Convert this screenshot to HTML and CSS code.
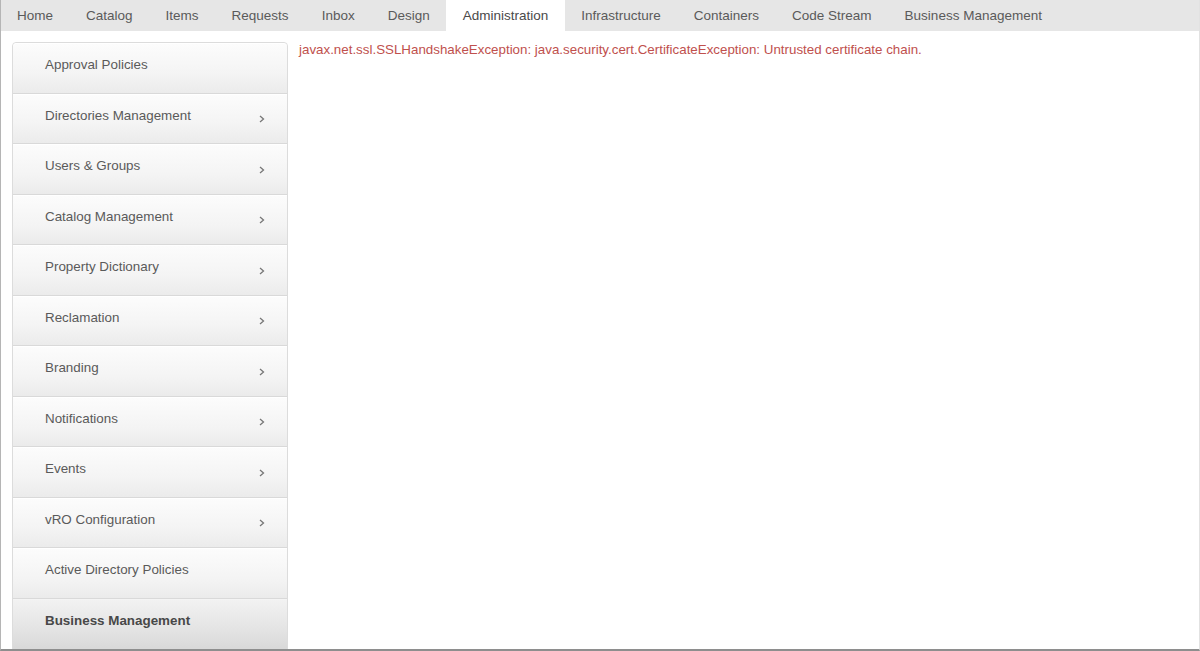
FILE: index.html
```html
<!DOCTYPE html>
<html>
<head>
<meta charset="utf-8">
<link rel="stylesheet" href="styles.css">
</head>
<body>
<div class="window">
  <nav class="tabs">
    <a class="tab">Home</a>
    <a class="tab">Catalog</a>
    <a class="tab">Items</a>
    <a class="tab">Requests</a>
    <a class="tab">Inbox</a>
    <a class="tab">Design</a>
    <a class="tab active">Administration</a>
    <a class="tab">Infrastructure</a>
    <a class="tab">Containers</a>
    <a class="tab">Code Stream</a>
    <a class="tab">Business Management</a>
  </nav>
  <div class="main">
    <ul class="sidebar">
      <li class="item"><span>Approval Policies</span></li>
      <li class="item"><span>Directories Management</span><svg class="chev" width="6" height="8" viewBox="0 0 6 8"><path d="M1 1 L4.5 4 L1 7" fill="none" stroke="#777" stroke-width="1.3"/></svg></li>
      <li class="item"><span>Users &amp; Groups</span><svg class="chev" width="6" height="8" viewBox="0 0 6 8"><path d="M1 1 L4.5 4 L1 7" fill="none" stroke="#777" stroke-width="1.3"/></svg></li>
      <li class="item"><span>Catalog Management</span><svg class="chev" width="6" height="8" viewBox="0 0 6 8"><path d="M1 1 L4.5 4 L1 7" fill="none" stroke="#777" stroke-width="1.3"/></svg></li>
      <li class="item"><span>Property Dictionary</span><svg class="chev" width="6" height="8" viewBox="0 0 6 8"><path d="M1 1 L4.5 4 L1 7" fill="none" stroke="#777" stroke-width="1.3"/></svg></li>
      <li class="item"><span>Reclamation</span><svg class="chev" width="6" height="8" viewBox="0 0 6 8"><path d="M1 1 L4.5 4 L1 7" fill="none" stroke="#777" stroke-width="1.3"/></svg></li>
      <li class="item"><span>Branding</span><svg class="chev" width="6" height="8" viewBox="0 0 6 8"><path d="M1 1 L4.5 4 L1 7" fill="none" stroke="#777" stroke-width="1.3"/></svg></li>
      <li class="item"><span>Notifications</span><svg class="chev" width="6" height="8" viewBox="0 0 6 8"><path d="M1 1 L4.5 4 L1 7" fill="none" stroke="#777" stroke-width="1.3"/></svg></li>
      <li class="item"><span>Events</span><svg class="chev" width="6" height="8" viewBox="0 0 6 8"><path d="M1 1 L4.5 4 L1 7" fill="none" stroke="#777" stroke-width="1.3"/></svg></li>
      <li class="item"><span>vRO Configuration</span><svg class="chev" width="6" height="8" viewBox="0 0 6 8"><path d="M1 1 L4.5 4 L1 7" fill="none" stroke="#777" stroke-width="1.3"/></svg></li>
      <li class="item"><span>Active Directory Policies</span></li>
      <li class="item selected"><span>Business Management</span></li>
    </ul>
    <div class="content">
      <p class="error">javax.net.ssl.SSLHandshakeException: java.security.cert.CertificateException: Untrusted certificate chain.</p>
    </div>
  </div>
</div>
</body>
</html>
```
FILE: styles.css
```css
html, body {
  margin: 0;
  padding: 0;
  background: #ffffff;
}
body {
  font-family: "Liberation Sans", Arial, sans-serif;
  color: #555;
}
.window {
  width: 1200px;
  height: 651px;
  box-sizing: border-box;
  border-left: 1px solid #b5b5b5;
  border-right: 1px solid #e2e2e2;
  border-bottom: 2px solid #8e8e8e;
  overflow: hidden;
  display: flex;
  flex-direction: column;
}
.tabs {
  display: flex;
  height: 31px;
  background: #e6e6e6;
  flex-shrink: 0;
}
.tab {
  display: flex;
  align-items: center;
  padding: 0 16.5px 1px;
  font-size: 13.5px;
  color: #5a5a5a;
  line-height: 31px;
  box-sizing: border-box;
}
.tab:first-child {
  padding-left: 16px;
}
.tab.active {
  background: #ffffff;
  color: #4a4a4a;
}
.main {
  display: flex;
  align-items: flex-start;
  padding: 11px 0 0 11px;
  gap: 11px;
  flex: 1;
  min-height: 0;
}
.sidebar {
  list-style: none;
  margin: 0;
  padding: 0;
  width: 276px;
  flex-shrink: 0;
  border: 1px solid #dcdcdc;
  border-radius: 4px 4px 0 0;
  box-sizing: border-box;
  box-shadow: inset -3px 0 0 #f4f4f4;
}
.item {
  height: 50.5px;
  box-sizing: border-box;
  display: flex;
  align-items: center;
  justify-content: space-between;
  padding: 0 22px 0 32px;
  font-size: 13.4px;
  color: #5a5a5a;
  background: linear-gradient(to bottom, #fcfcfc 0%, #f4f4f4 60%, #ebebeb 100%);
  border-top: 1px solid #ffffff;
  border-bottom: 1px solid #d9d9d9;
}
.item:first-child {
  border-radius: 4px 4px 0 0;
}
.item span {
  margin-top: -7px;
}
.chev {
  margin-top: 1px;
}
.item.selected {
  font-weight: bold;
  color: #484848;
  background: linear-gradient(to bottom, #f2f2f2 0%, #e4e4e4 60%, #d9d9d9 100%);
  border-top: 1px solid #f4f4f4;
}
.content {
  flex: 1;
}
.error {
  margin: 0;
  padding-top: 1px;
  font-size: 13.35px;
  color: #c0504d;
  line-height: 14px;
}
```
